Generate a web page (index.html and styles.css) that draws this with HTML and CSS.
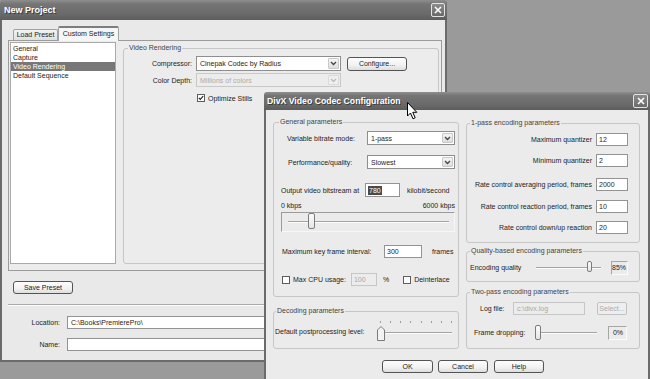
FILE: index.html
```html
<!DOCTYPE html>
<html>
<head>
<meta charset="utf-8">
<title>New Project</title>
<link rel="stylesheet" href="styles.css">
</head>
<body>
<div class="win np">
  <div class="titlebar">
    <span class="title">New Project</span>
    <span class="close"><svg width="8" height="8" viewBox="0 0 8 8"><path d="M1 1L7 7M7 1L1 7" stroke="#fff" stroke-width="1.6"/></svg></span>
  </div>
  <div class="client np-client">
    <div class="tabs">
      <div class="tab load">Load Preset</div>
      <div class="tab active">Custom Settings</div>
    </div>
    <div class="tabpanel">
      <ul class="list">
        <li>General</li>
        <li>Capture</li>
        <li class="sel">Video Rendering</li>
        <li>Default Sequence</li>
      </ul>
      <div class="group vr">
        <div class="legend">Video Rendering</div>
        <div class="vr-row r1">
          <span class="lbl">Compressor:</span>
          <div class="select comp"><span class="txt">Cinepak Codec by Radius</span><span class="arrow"><svg width="7" height="5" viewBox="0 0 7 5"><path d="M1 1L3.5 3.5L6 1" fill="none" stroke="#444" stroke-width="1.3"/></svg></span></div>
          <div class="btn configure">Configure...</div>
        </div>
        <div class="vr-row r2">
          <span class="lbl">Color Depth:</span>
          <div class="select comp depth disabled"><span class="txt">Millions of colors</span><span class="arrow"><svg width="7" height="5" viewBox="0 0 7 5"><path d="M1 1L3.5 3.5L6 1" fill="none" stroke="#bbb" stroke-width="1.3"/></svg></span></div>
        </div>
        <div class="vr-row r3">
          <span class="check"><svg width="6" height="6" viewBox="0 0 6 6"><path d="M0.8 2.8L2.3 4.3L5.2 1.2" fill="none" stroke="#222" stroke-width="1.2"/></svg></span>
          <span class="cklbl">Optimize Stills</span>
        </div>
      </div>
    </div>
    <div class="savebar"><div class="btn save">Save Preset</div></div>
    <div class="sep"></div>
    <div class="locrow"><span class="loclbl">Location:</span><div class="input loc">C:\Books\PremierePro\</div></div>
    <div class="locrow name"><span class="loclbl">Name:</span><div class="input loc"></div></div>
  </div>
</div>

<div class="win dx">
  <div class="titlebar">
    <span class="title">DivX Video Codec Configuration</span>
    <span class="close"><svg width="8" height="8" viewBox="0 0 8 8"><path d="M1 1L7 7M7 1L1 7" stroke="#fff" stroke-width="1.6"/></svg></span>
  </div>
  <div class="client dx-client">
    <div class="dx-cols">
      <div class="col">
        <div class="group gen">
          <div class="legend lg-gen">General parameters</div>
          <div class="row g1">
            <span class="glbl l1">Variable bitrate mode:</span>
            <div class="select dsel"><span class="txt">1-pass</span><span class="arrow"><svg width="7" height="5" viewBox="0 0 7 5"><path d="M1 1L3.5 3.5L6 1" fill="none" stroke="#444" stroke-width="1.3"/></svg></span></div>
          </div>
          <div class="row g2">
            <span class="glbl l2">Performance/quality:</span>
            <div class="select dsel"><span class="txt">Slowest</span><span class="arrow"><svg width="7" height="5" viewBox="0 0 7 5"><path d="M1 1L3.5 3.5L6 1" fill="none" stroke="#444" stroke-width="1.3"/></svg></span></div>
          </div>
          <div class="row g3">
            <span class="glbl l3">Output video bitstream at</span>
            <div class="input rate"><span class="hl">780</span></div>
            <span class="unit">kilobit/second</span>
          </div>
          <div class="row kbps"><span>0 kbps</span><span>6000 kbps</span></div>
          <div class="slidebox">
            <div class="track t-gen"></div>
            <div class="thumb th-gen" style="left:26px"></div>
          </div>
          <div class="row g5">
            <span class="glbl l5">Maximum key frame interval:</span>
            <div class="input key">300</div>
            <span class="frames">frames</span>
          </div>
          <div class="row g6">
            <span class="check"></span>
            <span class="cpu">Max CPU usage:</span>
            <div class="input cpuin disabled">100</div>
            <span class="pct">%</span>
            <span class="check deint"></span>
            <span class="cpu">Deinterlace</span>
          </div>
        </div>
        <div class="group dec">
          <div class="legend lg-dec">Decoding parameters</div>
          <div class="row decrow">
            <span class="declbl">Default postprocessing level:</span>
            <div class="slider decslider">
              <div class="ticks"></div>
              <div class="track t-dec"></div>
              <svg class="pthumb" style="left:1px" width="8" height="15" viewBox="0 0 8 15"><path d="M0.5 4L4 0.5L7.5 4V14.5H0.5Z" fill="#f3f3f3" stroke="#7a7a7a"/></svg>
            </div>
          </div>
        </div>
      </div>
      <div class="col">
        <div class="group one">
          <div class="legend lg-r">1-pass encoding parameters</div>
          <div class="qrow q1"><span>Maximum quantizer</span><div class="input qin">12</div></div>
          <div class="qrow q2"><span>Minimum quantizer</span><div class="input qin">2</div></div>
          <div class="qrow q3"><span>Rate control averaging period, frames</span><div class="input qin">2000</div></div>
          <div class="qrow q4"><span>Rate control reaction period, frames</span><div class="input qin">10</div></div>
          <div class="qrow q5"><span>Rate control down/up reaction</span><div class="input qin">20</div></div>
        </div>
        <div class="group qual">
          <div class="legend lg-r">Quality-based encoding parameters</div>
          <div class="row qualrow">
            <span class="qlbl">Encoding quality</span>
            <div class="slider qslider">
              <div class="track t-q"></div>
              <div class="thumb th-q" style="left:54px"></div>
            </div>
            <div class="valbox v85">85%</div>
          </div>
        </div>
        <div class="group two">
          <div class="legend lg-r">Two-pass encoding parameters</div>
          <div class="row tw1">
            <span class="loglbl">Log file:</span>
            <div class="input login disabled">c:\divx.log</div>
            <div class="btn selbtn disabled">Select...</div>
          </div>
          <div class="row tw2">
            <span class="fdlbl">Frame dropping:</span>
            <div class="slider fdslider">
              <div class="track t-fd"></div>
              <div class="thumb th-fd" style="left:2px"></div>
            </div>
            <div class="valbox v0">0%</div>
          </div>
        </div>
      </div>
    </div>
    <div class="dx-btns">
      <div class="btn ok">OK</div>
      <div class="btn cancel">Cancel</div>
      <div class="btn help">Help</div>
    </div>
  </div>
</div>

<svg class="cursor" width="11" height="18" viewBox="0 0 11 18"><path d="M0.5 0.5V14L3.5 11L6 16.8L8.2 15.8L5.8 10.3H9.8Z" fill="#fff" stroke="#000" stroke-width="1" stroke-linejoin="round"/></svg>
</body>
</html>
```

FILE: styles.css
```css
* { box-sizing: border-box; }
html, body { margin: 0; padding: 0; }
body {
  position: relative;
  width: 650px;
  height: 379px;
  overflow: hidden;
  background: #9a9a9a;
  font-family: "Liberation Sans", Arial, sans-serif;
  font-size: 7px;
  line-height: 9px;
  color: #1c1c1c;
}

/* windows */
.win { position: absolute; display: flex; flex-direction: column; }
.np { left: 0; top: 0; width: 447px; height: 362px; }
.dx { left: 264px; top: 92px; width: 386px; height: 300px; }

.titlebar {
  flex: none;
  display: flex;
  align-items: center;
  justify-content: space-between;
  color: #fff;
  font-weight: bold;
  background: linear-gradient(#8e8e8e, #757575 20%, #6a6a6a 70%, #5d5d5d);
  border-radius: 3px 3px 0 0;
  text-shadow: 1px 1px 0 #3e3e3e;
}
.np .titlebar { height: 20px; padding: 0 2px 0 4px; font-size: 9px; }
.dx .titlebar { height: 18px; padding: 0 2px 0 3px; font-size: 8.7px; }

.close {
  display: flex;
  align-items: center;
  justify-content: center;
  border: 1px solid #e4e4e4;
  border-radius: 2px;
  background: linear-gradient(#8c8c8c, #6a6a6a);
}
.np .close { width: 14px; height: 14px; }
.dx .close { width: 15px; height: 14px; }

.client {
  flex: 1;
  background: #e9e9e9;
  border: 2px solid #6b6b6b;
  border-top: 0;
}

/* common controls */
.btn {
  flex: none;
  display: flex;
  align-items: center;
  justify-content: center;
  border: 1px solid #545454;
  border-radius: 3px;
  background: linear-gradient(#fdfdfd, #f1f1f1 60%, #dddddd);
  color: #1c1c1c;
}
.btn.disabled { border-color: #c2c2c2; color: #ababab; background: #eeeeee; }

.input {
  flex: none;
  display: flex;
  align-items: center;
  background: #fff;
  border: 1px solid #939393;
  padding-left: 2px;
  white-space: nowrap;
  overflow: hidden;
}
.input.disabled { background: #ececec; border-color: #c6c6c6; color: #a8a8a8; }

.select {
  flex: none;
  display: flex;
  align-items: stretch;
  background: #fff;
  border: 1px solid #8e8e8e;
  padding: 1px 1px 1px 3px;
}
.select .txt { flex: 1; display: flex; align-items: center; white-space: nowrap; }
.select .arrow {
  flex: none;
  width: 11px;
  border: 1px solid #c9c9c9;
  border-radius: 1px;
  background: linear-gradient(#f6f6f6, #dedede);
  display: flex;
  align-items: center;
  justify-content: center;
}
.select.disabled { background: #ececec; border-color: #c8c8c8; color: #ababab; }
.select.disabled .arrow { background: #efefef; border-color: #dadada; }

.check {
  flex: none;
  width: 8px;
  height: 8px;
  border: 1px solid #5e5e5e;
  background: #fff;
  display: flex;
  align-items: center;
  justify-content: center;
}

.group { flex: none; border: 1px solid #c6c6c6; border-radius: 3px; }
.legend {
  width: max-content;
  margin-top: -6px;
  padding: 0 1px;
  line-height: 9px;
  color: #444;
  background: #e9e9e9;
}

.row { display: flex; align-items: center; }

/* New Project */
.np-client { padding: 6px 0 0 6px; }
.tabs {
  display: flex;
  align-items: flex-end;
  height: 14px;
  padding-left: 5px;
  position: relative;
  z-index: 1;
}
.tab {
  height: 11px;
  border: 1px solid #a2a2a2;
  border-bottom: 0;
  border-radius: 2px 2px 0 0;
  background: linear-gradient(#f2f2f2, #e0e0e0);
  text-align: center;
  line-height: 10px;
}
.tab.load { width: 45px; }
.tab.active {
  width: 61px;
  height: 15px;
  margin-bottom: -1px;
  background: #f6f6f6;
  border-top: 2px solid #7d7d7d;
  line-height: 12px;
}
.tabpanel {
  width: 434px;
  height: 231px;
  border: 1px solid #9c9c9c;
  background: #ececec;
  padding: 1px;
  display: flex;
  align-items: flex-start;
}
.list {
  flex: none;
  width: 106px;
  height: 222px;
  margin: 0;
  padding: 1px 0 0 0;
  list-style: none;
  border: 1px solid #a9a9a9;
  background: #fff;
}
.list li { padding-left: 2px; line-height: 9px; }
.list li.sel { background: #777; color: #fff; }

.vr { margin: 6px 0 0 7px; width: 316px; height: 216px; }
.vr .legend { margin-left: 4px; background: #ececec; }
.vr-row { display: flex; align-items: center; }
.vr-row .lbl { flex: none; width: 68px; margin-right: 4px; text-align: right; }
.vr-row.r1 { margin-top: 4px; height: 15px; }
.vr-row.r2 { margin-top: 2px; height: 14px; }
.vr-row.r3 { margin-top: 7px; height: 8px; padding-left: 73px; }
.select.comp { width: 145px; height: 15px; }
.select.depth { height: 14px; }
.configure { width: 60px; height: 14px; margin-left: 6px; }
.cklbl { margin-left: 3px; }

.savebar { margin-top: 10px; padding-left: 5px; }
.btn.save { width: 60px; height: 13px; }
.sep { margin-top: 10px; width: 434px; height: 2px; border-top: 1px solid #a9a9a9; border-bottom: 1px solid #fbfbfb; }
.locrow { display: flex; align-items: center; margin-top: 10px; }
.locrow.name { margin-top: 9px; }
.loclbl { flex: none; width: 52px; margin-right: 7px; text-align: right; }
.input.loc { width: 372px; height: 13px; padding-left: 3px; }

/* DivX */
.dx-client { background: #ebebeb; padding: 12px 0 0 7px; }
.dx .legend { background: #ebebeb; }
.dx-cols {
  display: grid;
  grid-template-columns: 186px 174px;
  column-gap: 7px;
  align-items: start;
}
.col { display: flex; flex-direction: column; }
.gen { height: 175px; }
.dec { height: 38px; margin-top: 14px; }
.one { height: 120px; margin-top: 1px; }
.qual { height: 31px; margin-top: 8px; }
.two { height: 57px; margin-top: 10px; }
.lg-gen { margin-left: 5px; }
.lg-dec { margin-left: 2px; }
.lg-r { margin-left: 3px; }

.glbl { flex: none; }
.g1 { margin-top: 5px; height: 14px; }
.g2 { margin-top: 10px; height: 14px; }
.l1 { width: 93px; padding-left: 13px; }
.l2 { width: 93px; padding-left: 14px; }
.select.dsel { width: 88px; height: 14px; }
.g3 { margin-top: 14px; height: 14px; }
.l3 { width: 91px; padding-left: 7px; }
.input.rate { width: 35px; height: 14px; }
.hl { background: #4a4a4a; color: #fff; padding: 0 1px; line-height: 9px; }
.unit { margin-left: 7px; }
.kbps { margin: 4px 3px 0 7px; height: 9px; justify-content: space-between; }
.slidebox {
  position: relative;
  margin: 2px 3px 0 7px;
  height: 20px;
  border: 1px solid;
  border-color: #9b9b9b #f7f7f7 #f7f7f7 #9b9b9b;
}
.slider { position: relative; flex: none; }
.track {
  position: absolute;
  height: 2px;
  border-top: 1px solid #a3a3a3;
  border-bottom: 1px solid #fcfcfc;
}
.thumb {
  position: absolute;
  border: 1px solid #7c7c7c;
  border-radius: 2px;
  background: linear-gradient(#fbfbfb, #e6e6e6);
}
.t-gen { left: 6px; right: 5px; top: 8px; }
.th-gen { top: 0; width: 7px; height: 16px; }
.g5 { margin-top: 13px; height: 13px; }
.l5 { width: 110px; padding-left: 8px; }
.input.key { width: 38px; height: 13px; }
.frames { margin-left: 10px; }
.g6 { margin-top: 15px; height: 13px; padding-left: 8px; }
.cpu { margin-left: 3px; }
.input.cpuin { width: 26px; height: 13px; margin-left: 5px; }
.pct { margin-left: 6px; }
.check.deint { margin-left: 14px; }

.decrow { margin-top: 5px; height: 22px; }
.declbl { flex: none; width: 102px; padding-left: 1px; }
.decslider { width: 78px; height: 22px; }
.ticks {
  position: absolute;
  left: 4px;
  top: 1px;
  width: 72px;
  height: 2px;
  background: repeating-linear-gradient(to right, #9d9d9d 0 1px, transparent 1px 10.14px);
}
.t-dec { left: 3px; right: 2px; top: 12px; }
.pthumb { position: absolute; top: 6px; }

.qrow { display: flex; align-items: center; justify-content: flex-end; height: 13px; padding-right: 11px; }
.qrow span { margin-right: 4px; }
.input.qin { width: 32px; height: 13px; }
.q1 { margin-top: 6px; }
.q2 { margin-top: 8px; }
.q3 { margin-top: 11px; }
.q4 { margin-top: 9px; }
.q5 { margin-top: 8px; }

.qualrow { margin-top: 5px; height: 15px; }
.qlbl { flex: none; width: 66px; padding-left: 3px; }
.qslider { width: 70px; height: 15px; }
.t-q { left: 3px; right: 2px; top: 7px; }
.th-q { top: 1px; width: 5px; height: 11px; }
.valbox {
  flex: none;
  height: 14px;
  border: 1px solid;
  border-color: #a6a6a6 #fbfbfb #fbfbfb #a6a6a6;
  display: flex;
  align-items: center;
  justify-content: flex-end;
  padding-right: 1px;
}
.v85 { width: 17px; margin-left: 8px; }
.v0 { width: 19px; margin-left: 8px; padding-right: 3px; }

.tw1 { margin-top: 6px; height: 13px; }
.loglbl { flex: none; width: 46px; padding-left: 13px; }
.input.login { width: 72px; height: 13px; padding-left: 3px; }
.btn.selbtn { width: 30px; height: 13px; margin-left: 12px; border-radius: 2px; }
.tw2 { margin-top: 10px; height: 15px; }
.fdlbl { flex: none; width: 66px; padding-left: 7px; }
.fdslider { width: 67px; height: 15px; }
.t-fd { left: 2px; right: 3px; top: 7px; }
.th-fd { top: 0; width: 6px; height: 15px; }

.dx-btns { display: flex; margin-top: 11px; padding-left: 109px; }
.dx-btns .btn { height: 13px; }
.btn.ok { width: 51px; }
.btn.cancel { width: 50px; margin-left: 5px; }
.btn.help { width: 50px; margin-left: 6px; }

.cursor { position: absolute; left: 407px; top: 102px; }
```
